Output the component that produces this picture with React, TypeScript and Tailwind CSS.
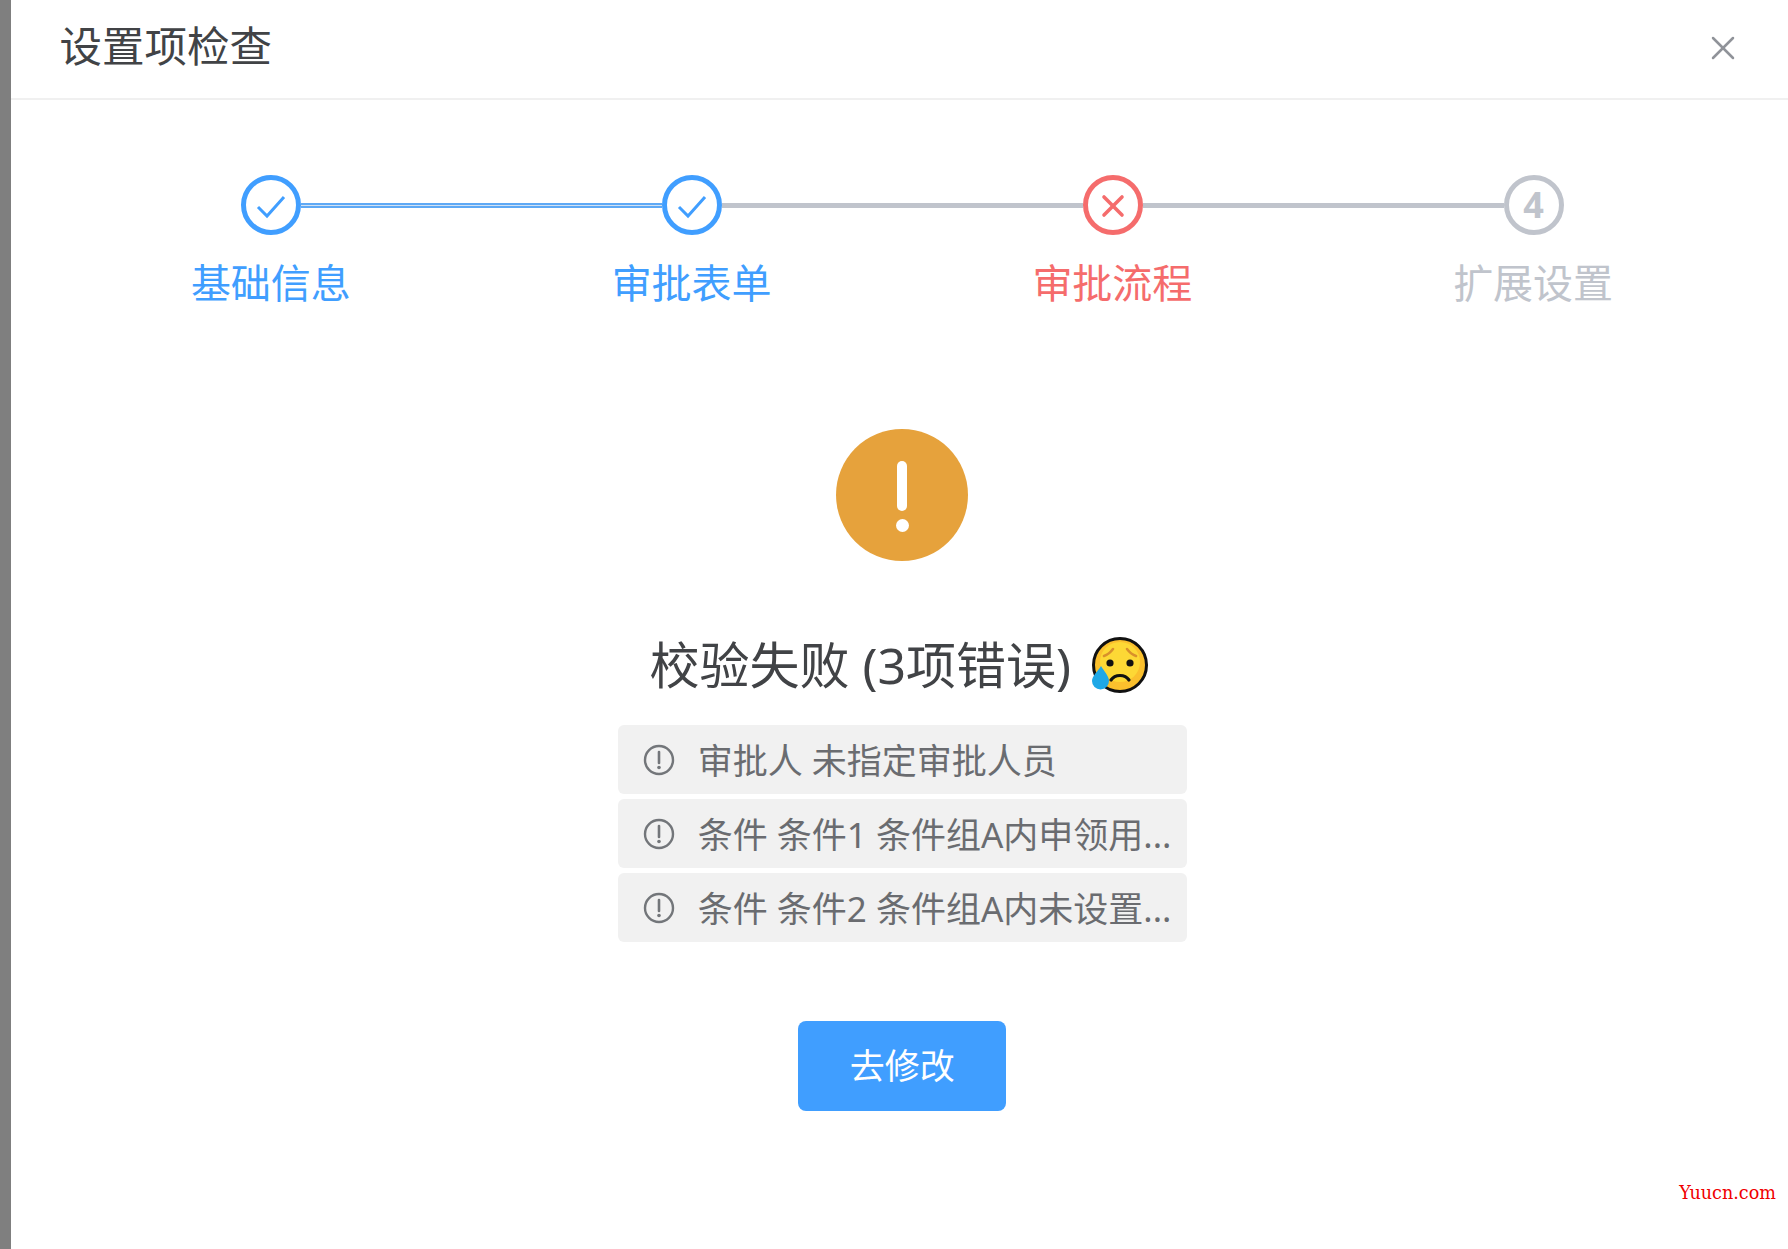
import { X } from "lucide-react";

const cjk = { fontFamily: '"Noto Sans", "Noto Sans CJK SC", sans-serif' };

const errors = [
  "审批人 未指定审批人员",
  "条件 条件1 条件组A内申领用...",
  "条件 条件2 条件组A内未设置...",
];

const labels = [
  { text: "基础信息", color: "text-[#409eff]" },
  { text: "审批表单", color: "text-[#409eff]" },
  { text: "审批流程", color: "text-[#f56c6c]" },
  { text: "扩展设置", color: "text-[#c0c4cc]" },
];

function StepCircle({ color, children }: { color: string; children: React.ReactNode }) {
  return (
    <div className={`flex h-[60px] w-[60px] shrink-0 items-center justify-center rounded-full border-[5px] bg-white ${color}`}>
      {children}
    </div>
  );
}

function CheckMark() {
  return (
    <svg width="32" height="26" viewBox="0 0 32 26" fill="none" stroke="#409eff" strokeWidth="3" className="mt-[3px]">
      <path d="M3 13l9 9L29 3" />
    </svg>
  );
}

function SadFace() {
  return (
    <svg width="58" height="58" viewBox="0 0 58 58">
      <circle cx="29" cy="29" r="26.5" fill="#fbc02d" stroke="#111" strokeWidth="3" />
      <circle cx="29" cy="26" r="20" fill="#fdd835" />
      <path d="M13 20c3-1 6-3 9-7M45 20c-3-1-6-3-9-7" fill="none" stroke="#d9902b" strokeWidth="2.6" strokeLinecap="round" />
      <circle cx="19" cy="27" r="3.6" fill="#111" />
      <circle cx="39" cy="27" r="3.6" fill="#111" />
      <path d="M20 44c4-6 14-6 18 0" fill="none" stroke="#111" strokeWidth="3.2" strokeLinecap="round" />
      <path d="M10 30c3 5 8 10 8 15a8.5 8.5 0 0 1-17 0c0-5 6-10 9-15z" fill="#1fa8e6" />
    </svg>
  );
}

function RowIcon() {
  return (
    <svg width="32" height="32" viewBox="0 0 32 32" className="shrink-0">
      <circle cx="16" cy="16" r="14" fill="none" stroke="#73767a" strokeWidth="2.4" />
      <path d="M16 8v11" stroke="#73767a" strokeWidth="2.6" strokeLinecap="round" />
      <circle cx="16" cy="23.5" r="1.8" fill="#73767a" />
    </svg>
  );
}

export default function App() {
  return (
    <div className="flex h-[1249px] w-[1788px] overflow-hidden bg-white" style={cjk}>
      <div className="w-[10.5px] shrink-0 bg-[#7f7f7f]" />
      <main className="relative flex flex-1 flex-col">
        <header className="flex h-[100px] shrink-0 items-center justify-between border-b-2 border-[#f0f0f0] pl-[49px] pr-[45px]">
          <h1 className="mb-[5px] text-[42.5px] font-normal leading-none text-[#414346]">设置项检查</h1>
          <X size={40} strokeWidth={1.5} className="mb-[3px] text-[#909399]" />
        </header>

        <div className="mt-[75px] flex items-center pl-[230px]">
          <StepCircle color="border-[#409eff]"><CheckMark /></StepCircle>
          <div className="h-[5px] w-[361px] border-y-2 border-[#5fa9f5] bg-[#cfe2f5]" />
          <StepCircle color="border-[#409eff]"><CheckMark /></StepCircle>
          <div className="h-[5px] w-[361px] bg-[#c0c4cc]" />
          <StepCircle color="border-[#f56c6c]">
            <X size={36} strokeWidth={2.4} className="mt-[2px] text-[#f56c6c]" />
          </StepCircle>
          <div className="h-[5px] w-[361px] bg-[#c0c4cc]" />
          <StepCircle color="border-[#c0c4cc]">
            <span className="text-[36px] font-bold leading-none text-[#c0c4cc]">4</span>
          </StepCircle>
        </div>

        <div className="mt-[20px] grid w-[1733px] grid-cols-4 pl-[50px]">
          {labels.map((l) => (
            <div key={l.text} className={`text-center text-[40px] leading-[56px] ${l.color}`}>
              {l.text}
            </div>
          ))}
        </div>

        <div className="flex flex-col items-center pl-[6px]">
          <div className="mt-[118px] flex h-[132px] w-[132px] flex-col items-center justify-center gap-[8px] rounded-full bg-[#e6a23c] pt-[2px]">
            <div className="h-[50px] w-[10px] rounded-full bg-white" />
            <div className="h-[13px] w-[13px] rounded-full bg-white" />
          </div>

          <div className="mt-[71px] ml-[-6px] flex h-[66px] items-center gap-[20px] text-[50px] leading-none text-[#414346]">
            <span>校验失败 (3项错误)</span>
            <SadFace />
          </div>

          <div className="mt-[27px] flex w-[569px] flex-col gap-[5px]">
            {errors.map((e) => (
              <div key={e} className="flex h-[69px] items-center gap-[23px] rounded-[6px] bg-[#f1f1f1] pl-[25px] text-[35px] text-[#6a6c70]">
                <RowIcon />
                <span className="whitespace-nowrap pt-[3px]">{e}</span>
              </div>
            ))}
          </div>

          <button className="mt-[79px] h-[90px] w-[208px] rounded-[8px] bg-[#409eff] text-[35px] text-white">
            去修改
          </button>
        </div>

        <div className="absolute bottom-[46px] right-[12px] text-[17.6px] leading-none text-[#f00000]" style={{ fontFamily: '"DejaVu Serif", serif' }}>
          Yuucn.com
        </div>
      </main>
    </div>
  );
}
